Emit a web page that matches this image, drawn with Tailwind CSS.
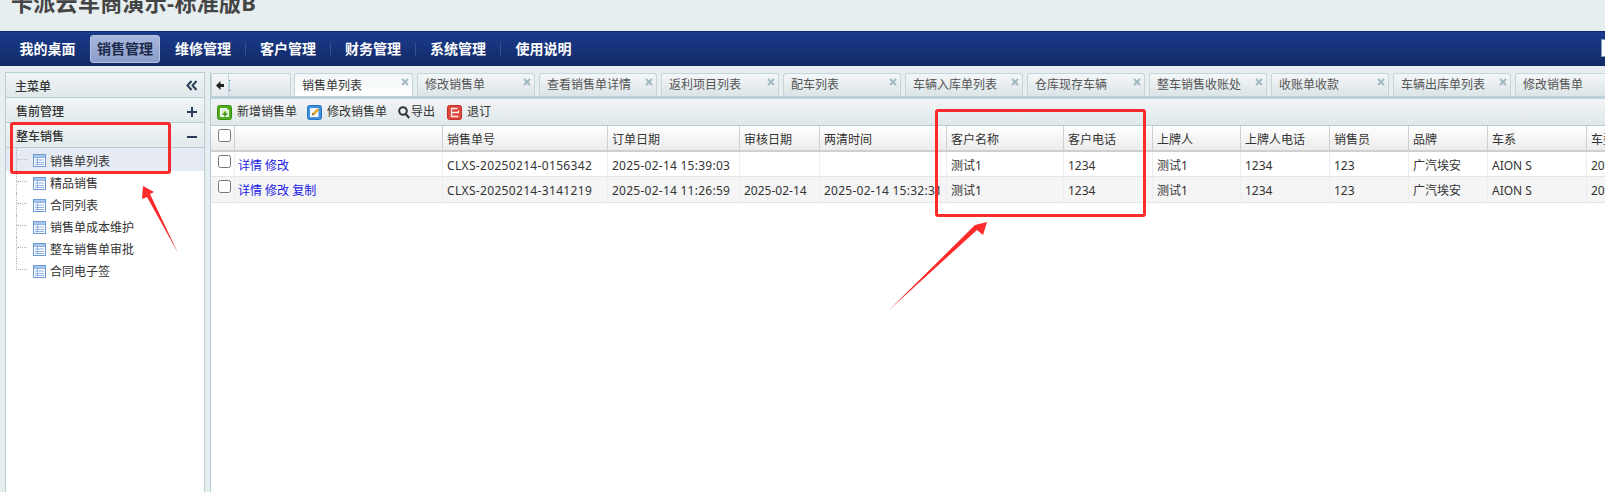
<!DOCTYPE html>
<html lang="zh-CN">
<head>
    <meta charset="UTF-8">
    <title>销售单列表</title>
    <script src="https://cdn.jsdelivr.net/npm/@tailwindcss/browser@4"></script>
</head>
<body class="relative h-[492px] w-[1605px] overflow-hidden bg-white text-[12px] text-[#333] font-['Noto_Sans','Noto_Sans_CJK_SC',sans-serif]">
    <!-- Header -->
    <header class="h-[31px] overflow-hidden bg-[#e6eef0]">
        <h1 class="-mt-[13px] pl-[11px] text-[22px] leading-[30px] font-bold tracking-[0.3px] text-[#444]">卡派云车商演示-标准版B</h1>
    </header>

    <!-- Nav -->
    <nav class="relative flex h-[35px] items-center border-t border-[#10296a] bg-gradient-to-b from-[#1a3b8c] to-[#122a66] pb-[1px] pl-[5px] text-[14px] font-bold text-white">
        <a class="flex h-[14px] w-[85px] items-center justify-center">我的桌面</a>
        <a class="flex h-[28px] w-[70px] items-center justify-center rounded-[3px] border border-[#b4c2e0] bg-gradient-to-b from-[#a8b7dc] to-[#8a9cca] text-[#1b2a48]">销售管理</a>
        <a class="ml-[1px] flex h-[14px] w-[85px] items-center justify-center border-r border-[#34508f]">维修管理</a>
        <a class="flex h-[14px] w-[85px] items-center justify-center border-r border-[#34508f]">客户管理</a>
        <a class="flex h-[14px] w-[85px] items-center justify-center border-r border-[#34508f]">财务管理</a>
        <a class="flex h-[14px] w-[85px] items-center justify-center border-r border-[#34508f]">系统管理</a>
        <a class="flex h-[14px] w-[85px] items-center justify-center">使用说明</a>
        <div class="absolute right-0 top-[7px] h-[18px] w-[4px] border border-r-0 border-[#7f9db5] bg-white"></div>
    </nav>

    <div class="flex h-[426px] bg-[#e6eef0]">
        <!-- Left menu -->
        <aside class="ml-[5px] mt-[6px] flex w-[200px] shrink-0 flex-col border border-b-0 border-[#b5ced4] bg-white">
            <div class="flex h-[25px] shrink-0 items-center justify-between border-b border-[#b5ced4] bg-gradient-to-b from-[#f1f5f6] to-[#dfe8ea] pl-[9px] pr-[6px]">
                <span class="mt-[4px] font-medium">主菜单</span>
                <svg width="12" height="11" viewBox="0 0 12 11" fill="none" stroke="#2a3f55" stroke-width="2"><path d="M5.5 1 1.5 5.5l4 4.5M10.5 1l-4 4.5 4 4.5"/></svg>
            </div>
            <div class="flex h-[25px] shrink-0 items-center justify-between border-b border-[#b5ced4] bg-gradient-to-b from-[#f1f5f6] to-[#e2eaec] pl-[10px] pr-[7px]">
                <span class="mt-[4px] font-medium">售前管理</span>
                <svg class="mt-[3px]" width="10" height="10" viewBox="0 0 10 10" stroke="#2a3f55" stroke-width="2"><path d="M0 5h10M5 0v10"/></svg>
            </div>
            <div class="flex h-[25px] shrink-0 items-center justify-between border-b border-[#b5ced4] bg-gradient-to-b from-[#f1f5f6] to-[#e2eaec] pl-[10px] pr-[7px]">
                <span class="mt-[4px] font-medium">整车销售</span>
                <svg class="mt-[3px]" width="10" height="10" viewBox="0 0 10 10" stroke="#2a3f55" stroke-width="2"><path d="M0 5h10"/></svg>
            </div>
            <ul id="menu"></ul>
        </aside>

        <!-- Content -->
        <main class="ml-[5px] mt-[6px] flex min-w-0 flex-1 flex-col overflow-hidden border-l border-[#b5ced4] bg-white">
            <!-- Tabs -->
            <div id="tabs" class="flex h-[27px] shrink-0 items-start overflow-hidden border-b-[3px] border-[#bcd2d8] bg-[#e6eef0] pt-[1px]"></div>

            <!-- Toolbar -->
            <div class="flex h-[27px] shrink-0 items-center border-b border-[#b5ced4] bg-gradient-to-b from-[#f2f5f6] to-[#dfe7ea] pl-[6px]">
                <svg width="15" height="15" viewBox="0 0 15 15"><rect x=".5" y=".5" width="14" height="14" rx="2" fill="#4fae1e" stroke="#3b8f12"/><path d="M3.500 3.500h6l2 2v6h-8z" fill="#dff3cf" stroke="#fff"/><path d="M8 6.500v5M5.500 9h5" stroke="#3b8f12" stroke-width="1.600"/></svg>
                <span class="ml-[5px]">新增销售单</span>
                <svg class="ml-[10px]" width="15" height="15" viewBox="0 0 15 15"><rect x=".5" y=".5" width="14" height="14" rx="2" fill="#3f8fe0" stroke="#2a74c4"/><rect x="3" y="3" width="8.500" height="9" fill="#f4f8fd"/><path d="M5 10.500l.6-2.400 4.800-4.800 1.800 1.800-4.800 4.800z" fill="#e8a92c"/><path d="M5 10.500l.6-2.400 1.200 1.200z" fill="#444"/></svg>
                <span class="ml-[5px]">修改销售单</span>
                <svg class="ml-[11px]" width="12" height="13" viewBox="0 0 12 13" fill="none" stroke="#333" stroke-width="2"><circle cx="5" cy="5" r="3.800"/><path d="M7.800 8l3.400 4"/></svg>
                <span class="ml-[1px]">导出</span>
                <svg class="ml-[12px]" width="15" height="15" viewBox="0 0 15 15"><rect x=".5" y=".5" width="14" height="14" rx="2" fill="#e0453a" stroke="#c23128"/><path d="M10.500 3.500h-6v8h7M4.500 7.500h7v-2" fill="none" stroke="#fbeeee" stroke-width="1.300"/></svg>
                <span class="ml-[5px]">退订</span>
            </div>

            <!-- Table -->
            <div class="overflow-hidden">
                <table class="w-[1476px] table-fixed border-separate border-spacing-0 [&_td]:overflow-visible [&_td]:whitespace-nowrap [&_td]:border-r [&_td]:border-b [&_td]:border-r-[#ededed] [&_td]:border-b-[#e4e4e4] [&_td]:px-[4px] [&_td]:pt-[3px] [&_th]:border-r [&_th]:border-b-2 [&_th]:border-r-[#d0d0d0] [&_th]:border-b-[#cfcfcf] [&_th]:bg-gradient-to-b [&_th]:from-white [&_th]:to-[#ececec] [&_th]:px-[4px] [&_th]:pt-[4px] [&_th]:text-left [&_th]:font-normal">
                    <colgroup>
                        <col class="w-[24px]"><col class="w-[208px]"><col class="w-[165px]"><col class="w-[132px]"><col class="w-[80px]"><col class="w-[127px]"><col class="w-[117px]"><col class="w-[89px]"><col class="w-[88px]"><col class="w-[89px]"><col class="w-[79px]"><col class="w-[79px]"><col class="w-[99px]"><col class="w-[100px]">
                    </colgroup>
                    <thead>
                        <tr class="h-[26px]">
                            <th class="align-top !pl-[7px] !pr-0 !pt-[3px]"><input type="checkbox" class="block"></th><th></th><th>销售单号</th><th>订单日期</th><th>审核日期</th><th>两清时间</th><th>客户名称</th><th>客户电话</th><th>上牌人</th><th>上牌人电话</th><th>销售员</th><th>品牌</th><th>车系</th><th>车型</th>
                        </tr>
                    </thead>
                    <tbody>
                        <tr class="h-[25px]">
                            <td class="align-top !pl-[7px] !pr-0"><input type="checkbox" class="block"></td>
                            <td class="!pl-[3px] text-[#1a1ae6]">详情 修改</td>
                            <td class="tracking-[0.33px]">CLXS-20250214-0156342</td><td class="tracking-[0.25px]">2025-02-14 15:39:03</td><td></td><td></td><td>测试1</td><td>1234</td><td>测试1</td><td>1234</td><td>123</td><td>广汽埃安</td><td>AION S</td><td>2023款</td>
                        </tr>
                        <tr class="h-[26px] bg-[#f5f5f5]">
                            <td class="align-top !pl-[7px] !pr-0"><input type="checkbox" class="block"></td>
                            <td class="!pl-[3px] text-[#1a1ae6]">详情 修改 复制</td>
                            <td class="tracking-[0.33px]">CLXS-20250214-3141219</td><td class="tracking-[0.25px]">2025-02-14 11:26:59</td><td>2025-02-14</td><td class="tracking-[0.25px]">2025-02-14 15:32:31</td><td>测试1</td><td>1234</td><td>测试1</td><td>1234</td><td>123</td><td>广汽埃安</td><td>AION S</td><td>2023款</td>
                        </tr>
                    </tbody>
                </table>
            </div>
        </main>
    </div>

    <!-- Red annotations on the screenshot -->
    <div class="absolute left-[10px] top-[122px] h-[52px] w-[161px] rounded-[3px] border-[3px] border-[#fb2b2b]"></div>
    <div class="absolute left-[935px] top-[109px] h-[108px] w-[211px] rounded-[3px] border-[3px] border-[#fb2b2b]"></div>
    <svg class="absolute inset-0" width="1605" height="492" viewBox="0 0 1605 492" fill="#fb2b2b">
        <path d="M143 186 154 192 150 194 178 253 147 197 142 199z"/>
        <path d="M987 222 983 235 977 230 888 311 973 227 975 225z"/>
    </svg>

    <script>
        // left tree
        const menuItems = ['销售单列表', '精品销售', '合同列表', '销售单成本维护', '整车销售单审批', '合同电子签'];
        const tableIcon = `<svg class="ml-[6px] mr-[4px] mt-[2px] shrink-0" width="13" height="13" viewBox="0 0 13 13"><rect x=".5" y=".5" width="12" height="12" fill="#fff" stroke="#6b9ad8"/><rect x="1" y="1" width="11" height="2" fill="#a9c6ec"/><path d="M1 3.500h11M2 6h9M2 8.500h9M2 10.500h9M4.500 3v8.500" stroke="#8eb2e4"/></svg>`;
        document.getElementById('menu').innerHTML = menuItems.map((name, i) => {
            const last = i === menuItems.length - 1;
            const branch = last
                ? `<span class="ml-[10px] h-1/2 w-[11px] shrink-0 self-start border-b border-l border-dotted border-[#b5b5b5]"></span>`
                : `<span class="ml-[10px] w-[11px] shrink-0 self-stretch border-l border-dotted border-[#b5b5b5]"><span class="block h-1/2 border-b border-dotted border-[#b5b5b5]"></span></span>`;
            const rowClass = i === 0 ? 'h-[23px] bg-[#e6ebf3]' : 'h-[22px]';
            return `<li class="flex items-center ${rowClass}">${branch}${tableIcon}<span class="mt-[4px]">${name}</span></li>`;
        }).join('');

        // tab strip
        const tabNames = ['修改销售单', '查看销售单详情', '返利项目列表', '配车列表', '车辆入库单列表', '仓库现存车辆', '整车销售收账处', '收账单收款', '车辆出库单列表'];
        const closeIcon = `<svg class="absolute right-[3px] top-[4px]" width="8" height="8" viewBox="0 0 8 8" stroke="#a3b9c1" stroke-width="2"><path d="M1 1l6 6M7 1 1 7"/></svg>`;
        const tabClass = 'relative flex h-[23px] w-[118px] shrink-0 items-center overflow-hidden rounded-t-[3px] border border-b-0 border-[#c3d6db] bg-gradient-to-b from-[#f4f7f8] to-[#dbe4e7] pl-[7px] text-[#555]';
        document.getElementById('tabs').innerHTML = `
            <div class="relative h-[23px] w-[80px] shrink-0 overflow-hidden rounded-t-[3px] border border-b-0 border-[#c3d6db] bg-gradient-to-b from-[#f4f7f8] to-[#dbe4e7]">
                <span class="absolute left-[-5px] top-[3px] text-[#555]">首页</span>
                <span class="absolute inset-y-0 left-0 flex w-[17px] items-center justify-center border-r border-[#c3d6db] bg-gradient-to-b from-[#f4f7f8] to-[#e4ebed]">
                    <svg width="8" height="9" viewBox="0 0 8 9" fill="#222"><path d="M0 4.500 4.500 0v3H8v3H4.500v3z"/></svg>
                </span>
            </div>
            <div class="relative ml-[3px] flex h-[25px] w-[119px] shrink-0 items-center rounded-t-[3px] border border-b-0 border-[#c3d6db] bg-gradient-to-b from-[#f3f7f8] to-white pl-[7px]">销售单列表${closeIcon}</div>
            ${tabNames.map(name => `<div class="ml-[4px] ${tabClass}">${name}${closeIcon}</div>`).join('')}
            <div class="ml-[4px] ${tabClass}">修改销售单</div>`;
    </script>
</body>
</html>
